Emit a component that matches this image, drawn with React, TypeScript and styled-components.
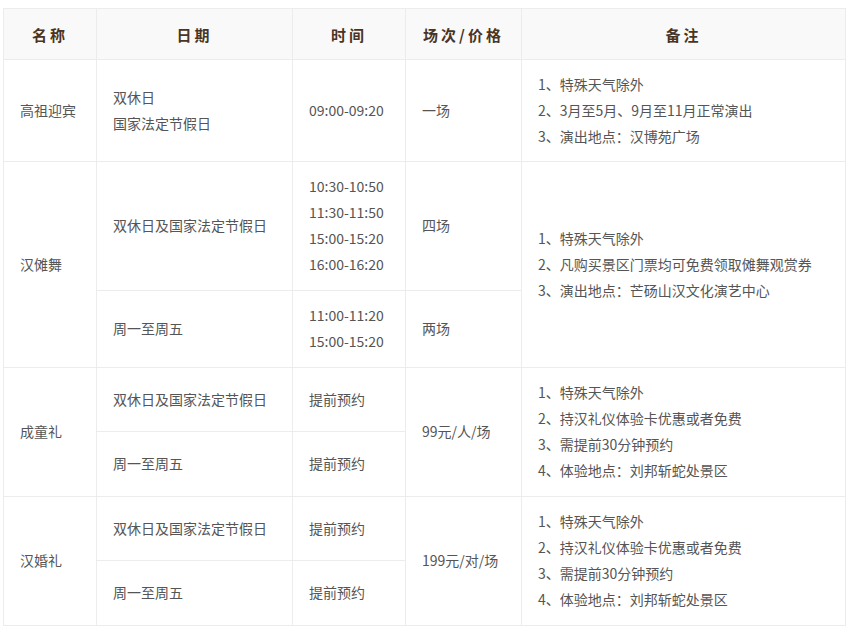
import React from 'react';
import styled, { createGlobalStyle } from 'styled-components';

const GlobalStyle = createGlobalStyle`
  body {
    margin: 0;
    padding: 8px 5px 0 3px;
    background: #fff;
    font-family: "Noto Sans CJK SC", "Noto Sans", sans-serif;
  }
`;

const Table = styled.table`
  width: 842px;
  border-collapse: collapse;
  table-layout: fixed;
  font-size: 14px;
  color: #555;
`;

const Col = styled.col<{ $w: number }>`
  width: ${(p) => p.$w}px;
`;

const HeadCell = styled.th`
  height: 50px;
  background: #f9f9f9;
  border: 1px solid #ececec;
  color: #4a3423;
  font-size: 15px;
  font-weight: 700;
  letter-spacing: 3px;
  font-family: "Noto Sans CJK SC", serif;
  text-align: center;
  padding: 0;
`;

const Row = styled.tr<{ $h: number }>`
  height: ${(p) => p.$h}px;
`;

const Cell = styled.td`
  border: 1px solid #ececec;
  padding: 0 16px 2px;
  vertical-align: middle;
  line-height: 26px;
  white-space: nowrap;
`;

const Lines = styled.div`
  display: flex;
  flex-direction: column;
`;

const Multi = ({ items }: { items: string[] }) => (
  <Lines>
    {items.map((t) => (
      <span key={t}>{t}</span>
    ))}
  </Lines>
);

const weather = '1、特殊天气除外';
const liyi = [weather, '2、持汉礼仪体验卡优惠或者免费', '3、需提前30分钟预约', '4、体验地点：刘邦斩蛇处景区'];

export default function App() {
  return (
    <>
      <GlobalStyle />
      <Table>
        <colgroup>
          <Col $w={93} />
          <Col $w={196} />
          <Col $w={113} />
          <Col $w={116} />
          <Col $w={324} />
        </colgroup>
        <thead>
          <tr>
            <HeadCell>名称</HeadCell>
            <HeadCell>日期</HeadCell>
            <HeadCell>时间</HeadCell>
            <HeadCell>场次/价格</HeadCell>
            <HeadCell>备注</HeadCell>
          </tr>
        </thead>
        <tbody>
          <Row $h={102}>
            <Cell>高祖迎宾</Cell>
            <Cell>
              <Multi items={['双休日', '国家法定节假日']} />
            </Cell>
            <Cell>09:00-09:20</Cell>
            <Cell>一场</Cell>
            <Cell>
              <Multi items={[weather, '2、3月至5月、9月至11月正常演出', '3、演出地点：汉博苑广场']} />
            </Cell>
          </Row>
          <Row $h={129}>
            <Cell rowSpan={2}>汉傩舞</Cell>
            <Cell>双休日及国家法定节假日</Cell>
            <Cell>
              <Multi items={['10:30-10:50', '11:30-11:50', '15:00-15:20', '16:00-16:20']} />
            </Cell>
            <Cell>四场</Cell>
            <Cell rowSpan={2}>
              <Multi items={[weather, '2、凡购买景区门票均可免费领取傩舞观赏券', '3、演出地点：芒砀山汉文化演艺中心']} />
            </Cell>
          </Row>
          <Row $h={77}>
            <Cell>周一至周五</Cell>
            <Cell>
              <Multi items={['11:00-11:20', '15:00-15:20']} />
            </Cell>
            <Cell>两场</Cell>
          </Row>
          <Row $h={64}>
            <Cell rowSpan={2}>成童礼</Cell>
            <Cell>双休日及国家法定节假日</Cell>
            <Cell>提前预约</Cell>
            <Cell rowSpan={2}>99元/人/场</Cell>
            <Cell rowSpan={2}>
              <Multi items={liyi} />
            </Cell>
          </Row>
          <Row $h={65}>
            <Cell>周一至周五</Cell>
            <Cell>提前预约</Cell>
          </Row>
          <Row $h={64}>
            <Cell rowSpan={2}>汉婚礼</Cell>
            <Cell>双休日及国家法定节假日</Cell>
            <Cell>提前预约</Cell>
            <Cell rowSpan={2}>199元/对/场</Cell>
            <Cell rowSpan={2}>
              <Multi items={liyi} />
            </Cell>
          </Row>
          <Row $h={65}>
            <Cell>周一至周五</Cell>
            <Cell>提前预约</Cell>
          </Row>
        </tbody>
      </Table>
    </>
  );
}
